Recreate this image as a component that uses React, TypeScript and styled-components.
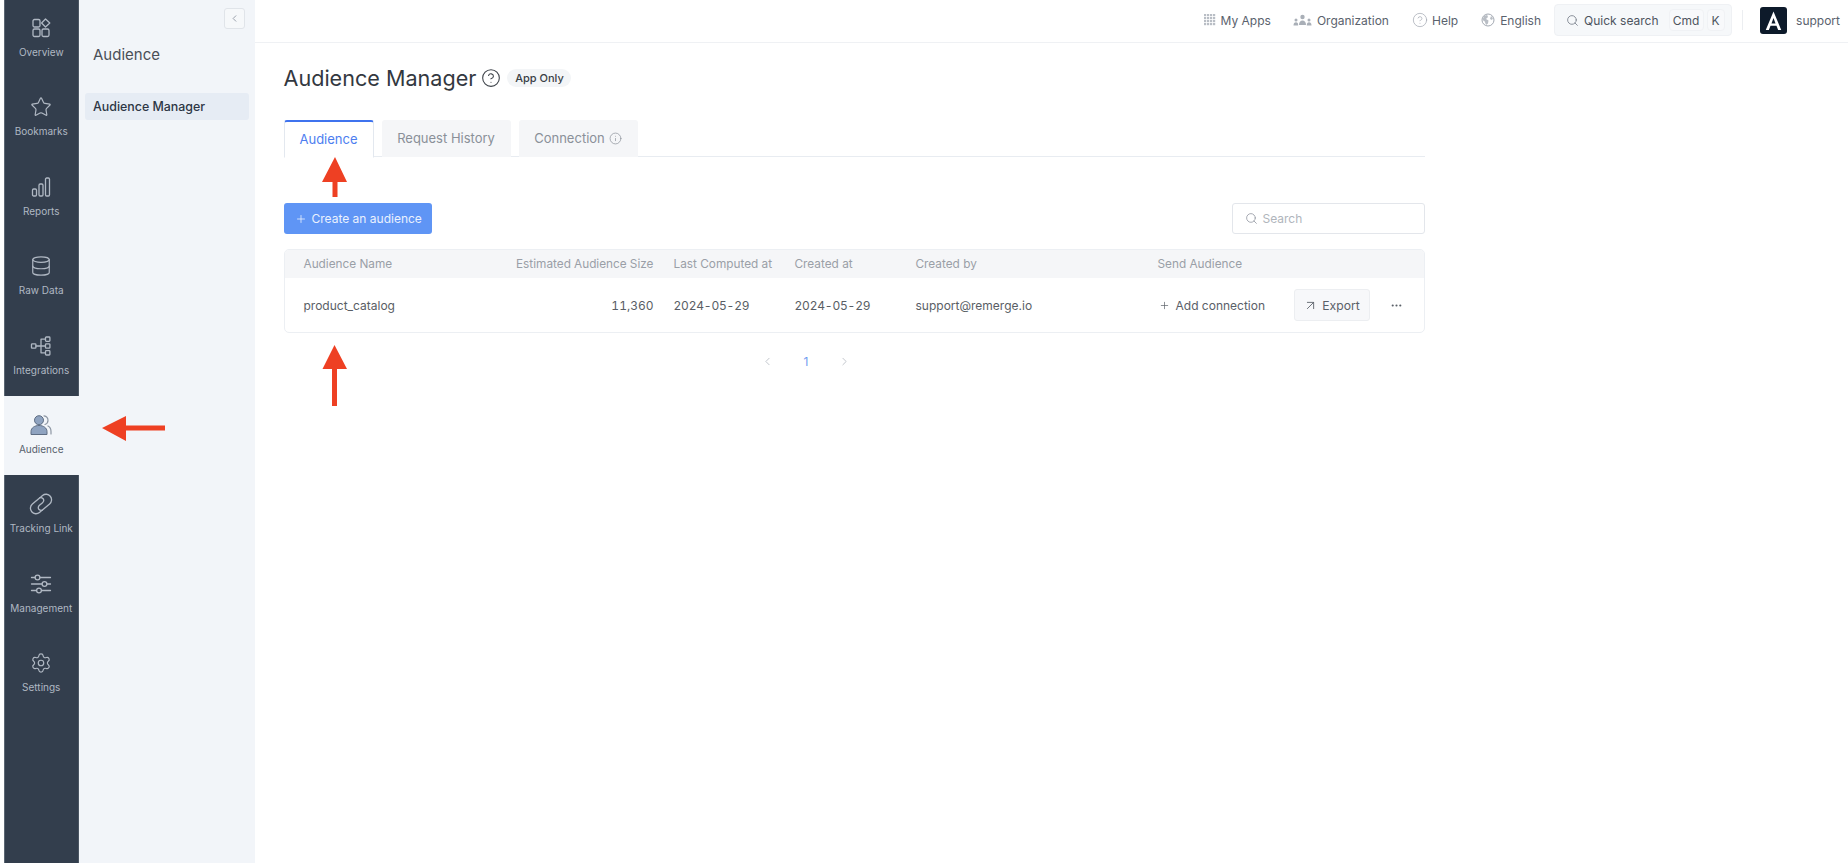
import React from "react";
import styled, { createGlobalStyle } from "styled-components";
import { Star, Database, Settings, CircleHelp, Search, Plus, ArrowUpRight, Ellipsis, Info, ChevronLeft, ChevronRight } from "lucide-react";

const Global = createGlobalStyle`
  html, body { margin: 0; padding: 0; background: #fff; }
  body { font-family: Inter, "Noto Sans", sans-serif; overflow: hidden; }
  * { box-sizing: border-box; }
`;

const Page = styled.div`
  position: relative;
  display: flex;
  width: 1848px;
  height: 863px;
  padding-left: 3.5px;
  background: #fff;
`;

const Rail = styled.nav`
  width: 75.5px;
  height: 864px;
  margin-top: -1px;
  flex: none;
  background: #333e4d;
  display: flex;
  flex-direction: column;
  border-left: 1px solid #5b6673;
  border-right: 1px solid #4b5663;
`;

const RailItem = styled.div<{ $active?: boolean }>`
  height: 79.4px;
  flex: none;
  margin: ${p => (p.$active ? "0 -1px" : "0")};
  background: ${p => (p.$active ? "#f2f5f9" : "transparent")};
  color: ${p => (p.$active ? "#565f6c" : "#b0b8c3")};
  display: flex;
  flex-direction: column;
  align-items: center;
  padding-top: 18px;
  gap: 7px;
  font-size: 10px;
  line-height: 13px;
  white-space: nowrap;
  svg { display: block; }
`;

const SubNav = styled.aside`
  width: 176px;
  flex: none;
  background: #f2f5f9;
  padding: 8px 6px 0;
  display: flex;
  flex-direction: column;
`;

const CollapseButton = styled.div`
  align-self: flex-end;
  width: 21px;
  height: 21px;
  margin-right: 4px;
  background: #f6f8fa;
  border: 1px solid #e0e4e9;
  border-radius: 3px;
  color: #8f97a3;
  display: flex;
  align-items: center;
  justify-content: center;
`;

const SubTitle = styled.div`
  font-size: 15px;
  line-height: 20px;
  color: #4a4f57;
  padding-left: 8px;
  margin-top: 16px;
`;

const SubItem = styled.div`
  margin-top: 28px;
  height: 27px;
  width: 164px;
  background: #e6ecf4;
  border-radius: 3px;
  padding-left: 8px;
  display: flex;
  align-items: center;
  font-size: 12.4px;
  font-weight: 500;
  color: #2d3644;
`;

const Main = styled.div`
  flex: 1;
  min-width: 0;
  display: flex;
  flex-direction: column;
`;

const TopBar = styled.header`
  height: 42.5px;
  flex: none;
  border-bottom: 1px solid #eff1f4;
  display: flex;
  align-items: center;
  justify-content: flex-end;
  padding: 0 8px 1px 0;
  font-size: 12px;
  color: #5a626d;
`;

const TopLink = styled.div<{ $gap: number; $after: number }>`
  display: flex;
  align-items: center;
  gap: ${p => p.$gap}px;
  margin-right: ${p => p.$after}px;
  white-space: nowrap;
  svg { color: #a3a9b2; flex: none; }
`;

const QuickSearch = styled.div`
  width: 178px;
  height: 32px;
  background: #f6f8fa;
  border: 1px solid #eff1f4;
  border-radius: 4px;
  display: flex;
  align-items: center;
  padding-left: 11px;
  color: #4d545e;
  svg { color: #7b828c; flex: none; margin-right: 5px; }
`;

const Key = styled.span<{ $w: number; $left: number }>`
  width: ${p => p.$w}px;
  height: 22px;
  margin-left: ${p => p.$left}px;
  border: 1px solid #f0f2f5;
  border-radius: 4px;
  display: flex;
  align-items: center;
  justify-content: center;
  background: #f8f9fb;
  font-size: 12px;
`;

const Divider = styled.div`
  width: 1px;
  height: 20px;
  background: #eceef1;
  margin: 0 17px 0 10px;
`;

const Logo = styled.div`
  width: 27px;
  height: 27px;
  border-radius: 3px;
  background: #0d1a2a;
  color: #fff;
  display: flex;
  align-items: center;
  justify-content: center;
  margin-right: 9px;
`;

const UserName = styled.span`
  font-size: 12px;
  color: #5a626d;
`;

const Content = styled.main`
  width: 1141px;
  margin-left: 28.5px;
  padding-top: 14px;
`;

const TitleRow = styled.div`
  display: flex;
  align-items: center;
  height: 42px;
`;

const Title = styled.h1`
  margin: 0;
  font-size: 21.6px;
  line-height: 30px;
  font-weight: 400;
  color: #33383f;
  white-space: nowrap;
`;

const TitleHelp = styled.span`
  margin-left: 5px;
  color: #3d4249;
  display: flex;
`;

const Badge = styled.span`
  margin-left: 6px;
  height: 18px;
  width: 64px;
  background: #f3f5f7;
  border-radius: 9px;
  font-size: 11px;
  font-weight: 500;
  color: #3a3f46;
  display: flex;
  align-items: center;
  justify-content: center;
  white-space: nowrap;
`;

const Tabs = styled.div`
  display: flex;
  gap: 8px;
  height: 37.5px;
  margin-top: 21px;
  border-bottom: 1px solid #e8ecf1;
`;

const Tab = styled.div<{ $active?: boolean; $w: number }>`
  width: ${p => p.$w}px;
  height: ${p => (p.$active ? "38px" : "37px")};
  display: flex;
  align-items: center;
  justify-content: center;
  gap: 4px;
  border-radius: 3px 3px 0 0;
  font-size: 13px;
  color: ${p => (p.$active ? "#4d7ef0" : "#8a9099")};
  background: ${p => (p.$active ? "#fff" : "#f5f6f8")};
  border: ${p => (p.$active ? "1px solid #e3e8ef" : "none")};
  border-top: ${p => (p.$active ? "2px solid #3f73ee" : "none")};
  border-bottom: ${p => (p.$active ? "1px solid #fff" : "none")};
`;

const Toolbar = styled.div`
  display: flex;
  justify-content: space-between;
  align-items: center;
  margin-top: 46px;
  height: 31px;
`;

const PrimaryButton = styled.div`
  width: 148px;
  height: 31px;
  border-radius: 3px;
  background: #5f95f5;
  color: #eaf1fe;
  display: flex;
  align-items: center;
  padding-left: 11px;
  gap: 5px;
  font-size: 12px;
  font-weight: 400;
  white-space: nowrap;
`;

const SearchInput = styled.div`
  width: 193px;
  height: 31px;
  border: 1px solid #e3e6eb;
  border-radius: 3px;
  background: #fff;
  display: flex;
  align-items: center;
  padding-left: 12px;
  gap: 5px;
  font-size: 12px;
  color: #b0b5bc;
  svg { color: #9298a1; }
`;

const Table = styled.div`
  margin-top: 15px;
  height: 84px;
  border: 1px solid #eceff3;
  border-radius: 5px;
  overflow: hidden;
`;

const GRID = "212px 138px 121px 121px 262px 136px 1fr";

const HeadRow = styled.div`
  height: 28px;
  background: #f5f6f8;
  display: grid;
  grid-template-columns: ${GRID};
  align-items: center;
  padding-left: 19px;
  font-size: 11.8px;
  color: #9a9fa7;
  white-space: nowrap;
`;

const BodyRow = styled.div`
  height: 54px;
  display: grid;
  grid-template-columns: ${GRID};
  align-items: center;
  padding-left: 19px;
  font-size: 12px;
  color: #595e65;
  white-space: nowrap;
`;

const RightCell = styled.span`
  text-align: right;
  font-variant-numeric: tabular-nums;
`;

const DateCell = styled.span<{ $numeric?: boolean }>`
  padding-left: 20px;
  font-variant-numeric: ${p => (p.$numeric ? "tabular-nums" : "normal")};
  letter-spacing: ${p => (p.$numeric ? "-0.2px" : "0")};
`;

const AddConnection = styled.span`
  display: flex;
  align-items: center;
  gap: 6px;
  margin-left: 1px;
  color: #5a6068;
`;

const Actions = styled.div`
  display: flex;
  align-items: center;
  gap: 20px;
  color: #5a6068;
`;

const ExportButton = styled.div`
  width: 76px;
  height: 32px;
  background: #f7f8fa;
  border: 1px solid #eceef1;
  border-radius: 3px;
  display: flex;
  align-items: center;
  justify-content: center;
  gap: 4px;
  font-size: 12.2px;
`;

const Pagination = styled.div`
  display: flex;
  justify-content: center;
  align-items: center;
  gap: 26px;
  height: 20px;
  margin-top: 18px;
  padding-right: 96px;
  color: #b4b9c0;
  font-size: 12px;
`;

const PageNumber = styled.span`
  color: #6f9bf0;
  width: 12px;
  text-align: center;
`;

const Annotations = styled.svg`
  position: absolute;
  left: 0;
  top: 0;
  width: 1848px;
  height: 866px;
  pointer-events: none;
`;

const s = { fill: "none", stroke: "currentColor", strokeWidth: 1.3, strokeLinecap: "round" as const, strokeLinejoin: "round" as const };

const OverviewIcon = () => (
  <svg width="22" height="22" viewBox="0 0 22 22" {...s}>
    <rect x="3" y="2.5" width="7" height="7.5" rx="1.5" />
    <rect x="3" y="12" width="7" height="7.5" rx="1.5" />
    <rect x="12" y="12" width="7" height="7.5" rx="1.5" />
    <path d="M15.5 2 19.8 6 15.5 10 11.6 6Z" />
  </svg>
);

const ReportsIcon = () => (
  <svg width="22" height="22" viewBox="0 0 22 22" {...s}>
    <rect x="2.5" y="13" width="4" height="7" rx="1.2" />
    <rect x="9" y="8" width="4" height="12" rx="1.2" />
    <rect x="15.5" y="2" width="4" height="18" rx="1.2" />
  </svg>
);

const IntegrationsIcon = () => (
  <svg width="22" height="22" viewBox="0 0 22 22" {...s}>
    <rect x="1.5" y="8.8" width="4.4" height="4.4" rx="0.8" />
    <rect x="15.5" y="2" width="4.4" height="4.4" rx="0.8" />
    <rect x="15.5" y="8.8" width="4.4" height="4.4" rx="0.8" />
    <rect x="15.5" y="15.6" width="4.4" height="4.4" rx="0.8" />
    <path d="M6 11h9.4M11 17.8V4.2M11 4.2h4.4M11 17.8h4.4" />
  </svg>
);

const AudienceIcon = () => (
  <svg width="22" height="22" viewBox="0 0 22 22">
    <circle cx="9" cy="6.200" r="4.500" fill="#8fa3c0" stroke="#5e6d83" strokeWidth="1" />
    <path d="M1 20.500v-3c0-3.500 3.500-6 8-6s8 2.500 8 6v3Z" fill="#8fa3c0" stroke="#5e6d83" strokeWidth="1" />
    <path d="M14 1.800c2.500.4 4 2.300 4 4.500s-1.200 3.600-3 4.200M18 12c2 1 3 3 3 5.500v2.500" fill="none" stroke="#8d96a3" strokeWidth="1.200" strokeLinecap="round" />
  </svg>
);

const LinkIcon = () => (
  <svg width="22" height="22" viewBox="1 1 20 20" overflow="visible" {...s} strokeWidth={1.2}>
    <g transform="rotate(-40 11 11)">
      <path d="M13.500 6H5a5 5 0 0 0 0 10h3" />
      <path d="M8.500 16H17a5 5 0 0 0 0-10h-3" />
      <path d="M8 16c-2-1.200-2-3.500-.5-4.500.6-.4 1.300-.5 2-.5h3c.7 0 1.400-.1 2-.5 1.500-1 1.500-3.300-.5-4.500" />
    </g>
  </svg>
);

const SlidersIcon = () => (
  <svg width="22" height="22" viewBox="0 0 22 22" {...s}>
    <path d="M1.500 4.500h3.500M10 4.500h10.500M1.500 11h10.500M17 11h3.500M1.500 17.500h5M11.500 17.500h9" />
    <circle cx="7.500" cy="4.500" r="2.400" />
    <circle cx="14.500" cy="11" r="2.400" />
    <circle cx="9" cy="17.500" r="2.400" />
  </svg>
);

const GridDots = () => (
  <svg width="12" height="12" viewBox="0 0 12 12" fill="#b9bec5">
    {[0, 3, 6, 9].flatMap(x => [0, 3, 6, 9].map(y => <rect key={`${x}-${y}`} x={x} y={y} width="2.200" height="2.200" />))}
  </svg>
);

const OrgIcon = () => (
  <svg width="19" height="12" viewBox="0 0 19 12" fill="#a9afb7">
    <circle cx="9.500" cy="3" r="2.200" />
    <path d="M6 11c0-3 1.500-4.500 3.500-4.500S13 8 13 11Z" />
    <circle cx="3" cy="6" r="1.500" />
    <path d="M.5 11.500c0-2 1-3.200 2.500-3.200s2.200 1.200 2.200 3.200Z" />
    <circle cx="16" cy="6" r="1.500" />
    <path d="M13.800 11.500c0-2 .8-3.200 2.200-3.200s2.500 1.200 2.500 3.200Z" />
  </svg>
);

const GlobeIcon = () => (
  <svg width="14" height="14" viewBox="0 0 14 14">
    <circle cx="7" cy="7" r="6" fill="none" stroke="#a3a9b2" strokeWidth="1" />
    <path d="M3 2.800 6.200 2 7 4 5 6l2.500 1.500L7 10.500 5 12 3.800 8.500 1.500 7Z" fill="#b9bec5" />
    <path d="M10 3l2 2-1 2-2-1Z" fill="#b9bec5" />
  </svg>
);

const navItems = [
  { label: "Overview", icon: <OverviewIcon /> },
  { label: "Bookmarks", icon: <Star size={22} strokeWidth={1.3} /> },
  { label: "Reports", icon: <ReportsIcon /> },
  { label: "Raw Data", icon: <Database size={22} strokeWidth={1.3} /> },
  { label: "Integrations", icon: <IntegrationsIcon /> },
  { label: "Audience", icon: <AudienceIcon />, active: true },
  { label: "Tracking Link", icon: <LinkIcon /> },
  { label: "Management", icon: <SlidersIcon /> },
  { label: "Settings", icon: <Settings size={22} strokeWidth={1.3} /> },
];

export default function App() {
  return (
    <Page>
      <Global />
      <Rail>
        {navItems.map(item => (
          <RailItem key={item.label} $active={item.active}>
            {item.icon}
            <span>{item.label}</span>
          </RailItem>
        ))}
      </Rail>
      <SubNav>
        <CollapseButton><ChevronLeft size={11} strokeWidth={2} /></CollapseButton>
        <SubTitle>Audience</SubTitle>
        <SubItem>Audience Manager</SubItem>
      </SubNav>
      <Main>
        <TopBar>
          <TopLink $gap={5} $after={22}><GridDots />My Apps</TopLink>
          <TopLink $gap={5} $after={23}><OrgIcon />Organization</TopLink>
          <TopLink $gap={4} $after={23}><CircleHelp size={16} strokeWidth={1.1} />Help</TopLink>
          <TopLink $gap={5} $after={13}><GlobeIcon />English</TopLink>
          <QuickSearch>
            <Search size={13} strokeWidth={1.6} />
            Quick search
            <Key $w={35} $left={10}>Cmd</Key>
            <Key $w={18} $left={3}>K</Key>
          </QuickSearch>
          <Divider />
          <Logo>
            <svg width="25" height="25" viewBox="0 0 21 21"><path d="M10.500 3 4 18.500h2.600l1.400-3.500h5l1.400 3.500H17ZM8.800 13l1.700-4.600 1.700 4.600Z" fill="#fff" fillRule="evenodd" /></svg>
          </Logo>
          <UserName>support</UserName>
        </TopBar>
        <Content>
          <TitleRow>
            <Title>Audience Manager</Title>
            <TitleHelp><CircleHelp size={20} strokeWidth={1.3} /></TitleHelp>
            <Badge>App Only</Badge>
          </TitleRow>
          <Tabs>
            <Tab $active $w={90}>Audience</Tab>
            <Tab $w={129}>Request History</Tab>
            <Tab $w={119}>Connection <Info size={13} strokeWidth={1.3} /></Tab>
          </Tabs>
          <Toolbar>
            <PrimaryButton><Plus size={12} strokeWidth={1.6} />Create an audience</PrimaryButton>
            <SearchInput><Search size={13} strokeWidth={1.5} />Search</SearchInput>
          </Toolbar>
          <Table>
            <HeadRow>
              <span>Audience Name</span>
              <RightCell>Estimated Audience Size</RightCell>
              <DateCell>Last Computed at</DateCell>
              <DateCell>Created at</DateCell>
              <DateCell>Created by</DateCell>
              <span>Send Audience</span>
              <span />
            </HeadRow>
            <BodyRow>
              <span>product_catalog</span>
              <RightCell>11,360</RightCell>
              <DateCell $numeric>2024-05-29</DateCell>
              <DateCell $numeric>2024-05-29</DateCell>
              <DateCell>support@remerge.io</DateCell>
              <AddConnection><Plus size={11} strokeWidth={1.5} />Add connection</AddConnection>
              <Actions>
                <ExportButton><ArrowUpRight size={15} strokeWidth={1.4} />Export</ExportButton>
                <Ellipsis size={13} strokeWidth={2} />
              </Actions>
            </BodyRow>
          </Table>
          <Pagination>
            <ChevronLeft size={13} strokeWidth={1.5} />
            <PageNumber>1</PageNumber>
            <ChevronRight size={13} strokeWidth={1.5} />
          </Pagination>
        </Content>
      </Main>
      <Annotations viewBox="0 0 1848 866">
        <path d="M335 157 347 182H337.500V197H332.500V182H322Z" fill="#ee4023" />
        <path d="M334.500 345 347 369H337V406H332V369H322.500Z" fill="#ee4023" />
        <path d="M102 428 126 416V425.500H165V430.500H126V441Z" fill="#ee4023" />
      </Annotations>
    </Page>
  );
}
